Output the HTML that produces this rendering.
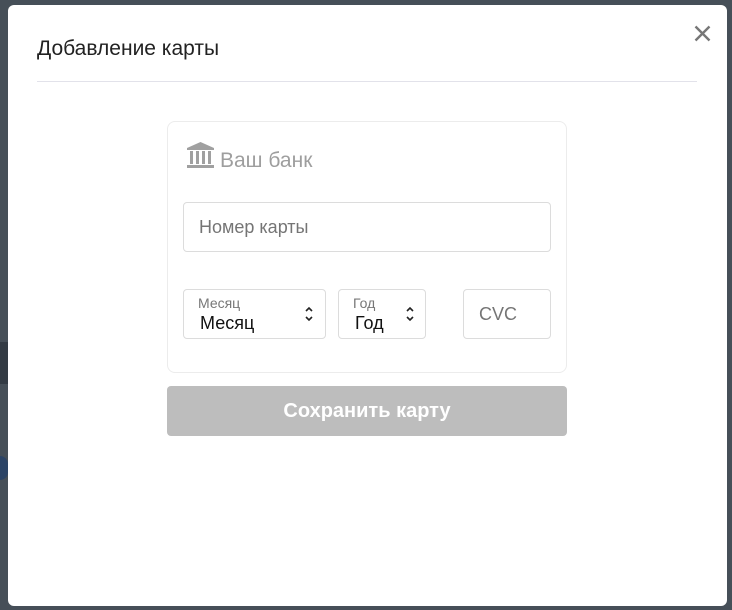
<!DOCTYPE html>
<html><head><meta charset="utf-8"><style>
body{margin:0;width:732px;height:610px;background:#464f58;position:relative;overflow:hidden;font-family:"Liberation Sans",sans-serif}
.m{position:absolute;left:8px;top:5px;width:719px;height:601px;background:#fff;border-radius:6px}
.t{position:absolute;left:29px;top:32px;font-size:21px;color:#222}
.hr{position:absolute;left:29px;right:30px;top:76px;border-top:1px solid #e2e2ea}
.x{position:absolute;left:686px;top:20px}
.card{position:absolute;left:159px;top:116px;width:398px;height:250px;border:1px solid #ececec;border-radius:8px}
.box{position:absolute;border:1px solid #dcdcdc;border-radius:4px;background:#fff}
.btn{position:absolute;left:159px;top:381px;width:400px;height:50px;background:#bdbdbd;border-radius:4px;color:#fff;font-size:20px;font-weight:bold;text-align:center;line-height:50px}
.ch{position:absolute;top:15px}
</style></head><body>
<div style="position:absolute;left:0;top:342px;width:8px;height:42px;background:#333b44"></div>
<div style="position:absolute;left:0;top:456px;width:8px;height:24px;background:#2c4466;border-radius:0 12px 12px 0"></div>
<div class="m">
<div class="t">Добавление карты</div>
<div class="hr"></div>
<svg class="x" width="17" height="17" viewBox="0 0 17 17"><path d="M1.5 1.5L15.5 15.5M15.5 1.5L1.5 15.5" stroke="#777" stroke-width="2.4"/></svg>
<div class="card">
<svg style="position:absolute;left:18px;top:20px" width="29" height="28" viewBox="0 0 29 28"><path d="M14.5 0L28 6V8H1V6Z" fill="#a0a0a0"/><rect x="4" y="9" width="3" height="13" fill="#a0a0a0"/><rect x="10" y="9" width="3" height="13" fill="#a0a0a0"/><rect x="16" y="9" width="3" height="13" fill="#a0a0a0"/><rect x="22" y="9" width="3" height="13" fill="#a0a0a0"/><rect x="1" y="23" width="27" height="3" fill="#a0a0a0"/></svg>
<div style="position:absolute;left:52px;top:27px;font-size:21px;color:#9e9e9e">Ваш банк</div>
<div class="box" style="left:15px;top:80px;width:366px;height:48px"><span style="position:absolute;left:15px;top:14px;font-size:18px;color:#757575">Номер карты</span></div>
<div class="box" style="left:15px;top:167px;width:141px;height:48px"><span style="position:absolute;left:14px;top:5px;font-size:14px;color:#777">Месяц</span><span style="position:absolute;left:16px;top:23px;font-size:18px;color:#111">Месяц</span><svg class="ch" style="left:120px" width="10" height="18" viewBox="0 0 10 18"><path d="M2 6L5 3L8 6M2 12L5 15L8 12" stroke="#222" stroke-width="1.6" fill="none"/></svg></div>
<div class="box" style="left:170px;top:167px;width:86px;height:48px"><span style="position:absolute;left:14px;top:5px;font-size:14px;color:#777">Год</span><span style="position:absolute;left:16px;top:23px;font-size:18px;color:#111">Год</span><svg class="ch" style="left:66px" width="10" height="18" viewBox="0 0 10 18"><path d="M2 6L5 3L8 6M2 12L5 15L8 12" stroke="#222" stroke-width="1.6" fill="none"/></svg></div>
<div class="box" style="left:295px;top:167px;width:86px;height:48px"><span style="position:absolute;left:15px;top:14px;font-size:18px;color:#757575">CVC</span></div>
</div>
<div class="btn">Сохранить карту</div>
</div>
</body></html>
